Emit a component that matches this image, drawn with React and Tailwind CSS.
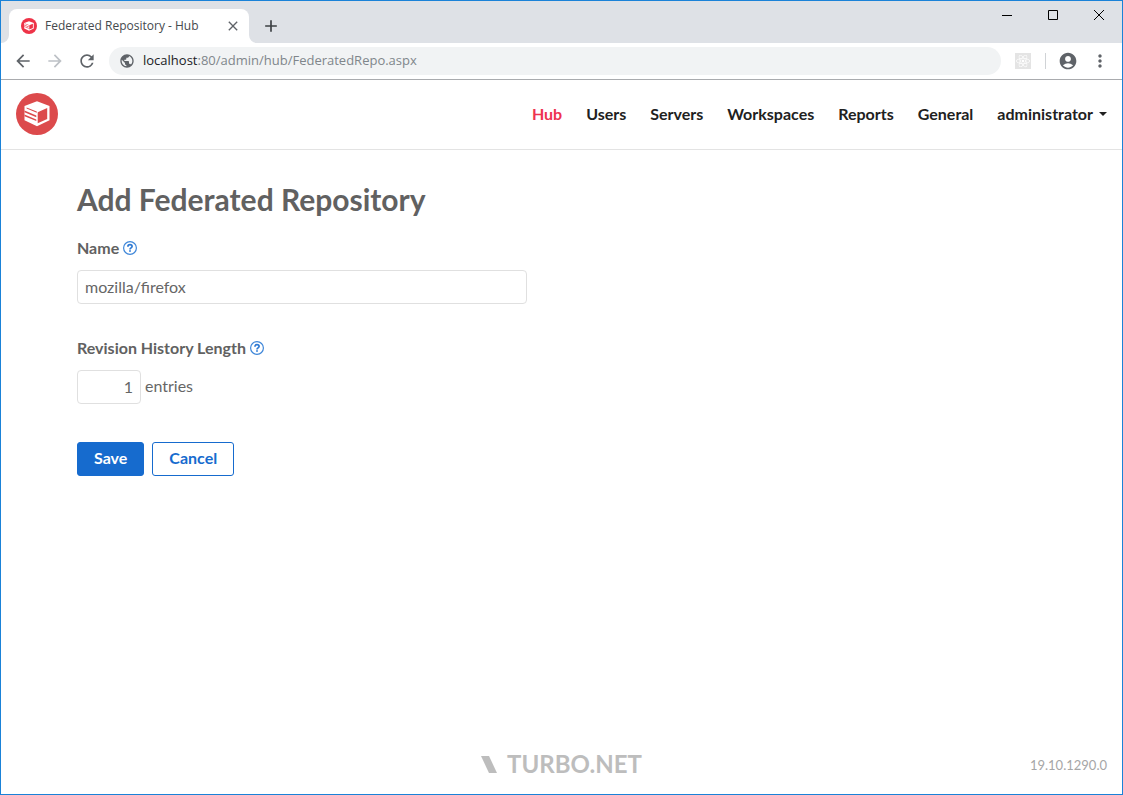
import { useState } from "react";
import {
  MdAccountCircle,
  MdAdd,
  MdArrowBack,
  MdArrowForward,
  MdClose,
  MdMoreVert,
  MdPublic,
  MdRefresh,
} from "react-icons/md";
import { FaReact } from "react-icons/fa";

function HubLogo({ className, disc }) {
  return (
    <svg viewBox="0 0 42 42" className={className} aria-hidden="true">
      <circle cx="21" cy="21" r="21" fill={disc} />
      <path fill="#fff" d="M21 8.300 33.500 13v14.300L21 33.200 8.500 27.300V13z" />
      <path
        fill={disc}
        d="M21.700 19.200 31.200 15v11L21.700 30.300zM10.600 14.400 20.800 18.600v1.200L10.600 15.600zM8.500 17.600 20.300 22.500v1.700L8.500 19.300zM8.500 21.500 20.300 26.400v1.700L8.500 23.200z"
      />
    </svg>
  );
}

function HelpIcon() {
  return (
    <svg viewBox="0 0 14 14" className="size-3.5" fill="none" aria-hidden="true">
      <circle cx="7" cy="7" r="6.400" stroke="#3f87d9" strokeWidth="1.200" />
      <path d="M4.900 5.700C4.900 4.400 5.800 3.700 7 3.700s2.100.7 2.100 1.800c0 1.400-2.100 1.400-2.100 2.900" stroke="#2f7ad4" strokeWidth="1.700" />
      <path d="M6.100 9.200h1.800v1.600H6.100z" fill="#2f7ad4" />
    </svg>
  );
}

function TitleBar() {
  return (
    <div className="flex h-[42px] items-end bg-[#dee1e6]">
      <svg viewBox="0 0 8 8" className="size-2 shrink-0" aria-hidden="true">
        <path d="M8 0v8H0a8 8 0 0 0 8-8z" fill="#fff" />
      </svg>
      <div className="flex h-[34px] w-60 items-center rounded-t-lg bg-white pr-2 pl-3">
        <HubLogo className="size-4 shrink-0" disc="#ee3348" />
        <span className="ml-2 flex-1 truncate text-xs text-[#45494d]">Federated Repository - Hub</span>
        <button type="button" aria-label="Close tab" className="text-[#5f6368]">
          <MdClose className="size-4" />
        </button>
      </div>
      <svg viewBox="0 0 8 8" className="size-2 shrink-0" aria-hidden="true">
        <path d="M0 0v8h8a8 8 0 0 1-8-8z" fill="#fff" />
      </svg>
      <button type="button" aria-label="New tab" className="flex h-[34px] w-7 items-center justify-center text-[#3c4043]">
        <MdAdd className="size-5" />
      </button>
      <div className="ml-auto flex h-full items-start text-black">
        <button type="button" aria-label="Minimize" className="flex h-7 w-[46px] items-center justify-center">
          <svg viewBox="0 0 10 10" className="size-2.5" aria-hidden="true">
            <path d="M0 5h10v1H0z" fill="currentColor" />
          </svg>
        </button>
        <button type="button" aria-label="Maximize" className="flex h-7 w-[46px] items-center justify-center">
          <svg viewBox="0 0 10 10" className="size-2.5" aria-hidden="true">
            <path d="M.5.5h9v9h-9z" fill="none" stroke="currentColor" />
          </svg>
        </button>
        <button type="button" aria-label="Close window" className="flex h-7 w-[46px] items-center justify-center">
          <svg viewBox="0 0 10 10" className="size-2.5" aria-hidden="true">
            <path d="M0 0 10 10M10 0 0 10" fill="none" stroke="currentColor" />
          </svg>
        </button>
      </div>
    </div>
  );
}

function Toolbar() {
  return (
    <div className="flex h-[37px] items-center border-b border-[#a9abae] bg-white px-3 text-[#5f6368]">
      <button type="button" aria-label="Back">
        <MdArrowBack className="size-5" />
      </button>
      <button type="button" aria-label="Forward" className="ml-3 text-[#bdc1c6]">
        <MdArrowForward className="size-5" />
      </button>
      <button type="button" aria-label="Reload" className="ml-3">
        <MdRefresh className="size-5" />
      </button>
      <div className="ml-3 flex h-7 flex-1 items-center rounded-full bg-[#f1f3f4] pl-2.5">
        <MdPublic className="size-4" />
        <span className="ml-2 text-[13px] text-[#80868b]">
          <span className="text-[#202124]">localhost</span>:80/admin/hub/FederatedRepo.aspx
        </span>
      </div>
      <span className="ml-3.5 flex size-4 items-center justify-center bg-[#e4e4e4] text-white">
        <FaReact className="size-3.5" />
      </span>
      <span className="ml-3.5 h-4 w-px bg-[#d0d3d6]" />
      <button type="button" aria-label="Profile" className="ml-3">
        <MdAccountCircle className="size-5" />
      </button>
      <button type="button" aria-label="Browser menu" className="ml-3">
        <MdMoreVert className="size-5" />
      </button>
    </div>
  );
}

const links = ["Hub", "Users", "Servers", "Workspaces", "Reports", "General"];

function SiteHeader() {
  return (
    <header className="flex h-[70px] items-center justify-between border-b border-[#e3e3e3] px-[15px] pb-0.5">
      <a href="#home" aria-label="Home">
        <HubLogo className="size-[42px]" disc="#dc4a4c" />
      </a>
      <nav className="flex items-center gap-6 text-base font-bold text-[#212121]">
        {links.map((label) => (
          <a key={label} href={"#" + label.toLowerCase()} className="first:text-[#ee3350]">
            {label}
          </a>
        ))}
        <button type="button" className="flex items-center gap-1.5">
          administrator
          <svg viewBox="0 0 8 4" className="h-1 w-2" aria-hidden="true">
            <path d="M0 0h8L4 4z" fill="currentColor" />
          </svg>
        </button>
      </nav>
    </header>
  );
}

export default function App() {
  const [name, setName] = useState("mozilla/firefox");
  const [length, setLength] = useState("1");

  return (
    <div className="flex min-h-screen flex-col border border-[#1a82d8] bg-white font-['Open_Sans',sans-serif]">
      <TitleBar />
      <Toolbar />
      <div className="flex flex-1 flex-col font-['Lato',sans-serif] text-base text-[#666]">
        <SiteHeader />
        <main className="flex-1 px-[76px] pt-[31px]">
          <h1 className="text-3xl font-bold text-[#616161]">Add Federated Repository</h1>
          <form onSubmit={(event) => event.preventDefault()}>
            <div className="mt-[19px] flex items-center gap-1 font-bold text-[#616161]">
              <label htmlFor="name">Name</label>
              <HelpIcon />
            </div>
            <input
              id="name"
              type="text"
              value={name}
              onChange={(event) => setName(event.target.value)}
              className="mt-2.5 block h-[34px] w-full max-w-[450px] rounded border border-[#e0e0e0] px-[7px] pb-0.5"
            />
            <div className="mt-8 flex items-center gap-1 font-bold text-[#616161]">
              <label htmlFor="length">Revision History Length</label>
              <HelpIcon />
            </div>
            <div className="mt-2.5 flex items-center gap-1">
              <input
                id="length"
                type="text"
                inputMode="numeric"
                value={length}
                onChange={(event) => setLength(event.target.value)}
                className="h-[34px] w-16 rounded border border-[#e0e0e0] px-[7px] pb-0.5 text-right"
              />
              <label htmlFor="length" className="pb-0.5">entries</label>
            </div>
            <div className="mt-[38px] flex gap-2 font-bold">
              <button type="submit" className="h-[34px] rounded-[3px] border border-[#166bce] bg-[#166bce] px-[15px] pb-0.5 text-white">
                <span className="px-px">Save</span>
              </button>
              <button type="button" className="h-[34px] rounded-[3px] border border-[#166bce] px-[15px] pb-0.5 text-[#166bce]">
                <span className="px-px">Cancel</span>
              </button>
            </div>
          </form>
        </main>
        <footer className="grid grid-cols-[1fr_auto_1fr] items-center px-[15px] pb-3.5 text-[#bdbdbd]">
          <div className="col-start-2 flex items-center gap-2.5">
            <svg viewBox="0 0 16 17" className="h-[17px] w-4" aria-hidden="true">
              <path d="M0 0h8l8 17H8z" fill="currentColor" />
            </svg>
            <span className="text-2xl font-bold">TURBO.NET</span>
          </div>
          <span className="justify-self-end pt-1 text-[13px] text-[#a6a6a6]">19.10.1290.0</span>
        </footer>
      </div>
    </div>
  );
}
